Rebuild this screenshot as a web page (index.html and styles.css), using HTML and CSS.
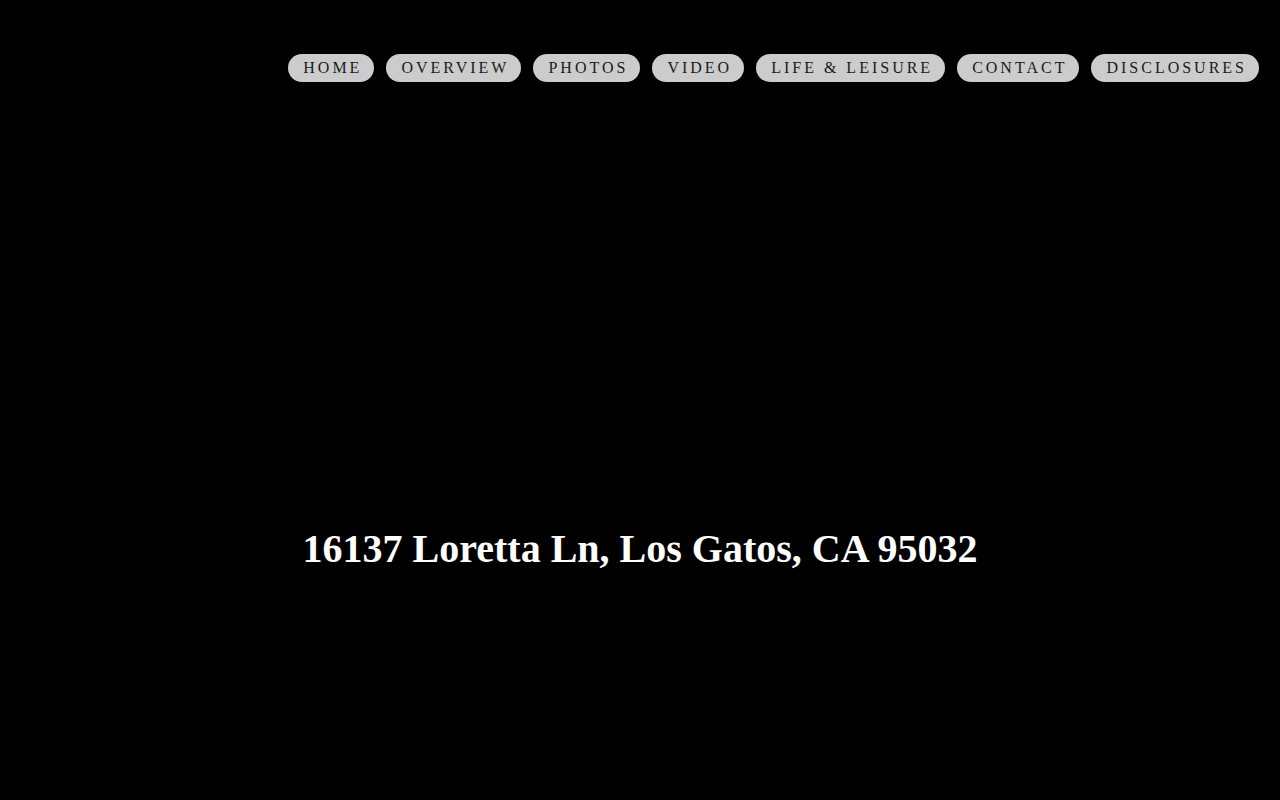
FILE: index.html
```html
<!DOCTYPE html>
<html>
<head>
<meta charset="utf-8">
<link rel="stylesheet" href="styles.css">
</head>
<body>
<header class="top">
  <nav class="nav">
    <a class="pill" href="#">HOME</a>
    <a class="pill" href="#">OVERVIEW</a>
    <a class="pill" href="#">PHOTOS</a>
    <a class="pill" href="#">VIDEO</a>
    <a class="pill" href="#">LIFE &amp; LEISURE</a>
    <a class="pill" href="#">CONTACT</a>
    <a class="pill" href="#">DISCLOSURES</a>
  </nav>
</header>
<main class="hero">
  <h1 class="title">16137 Loretta Ln, Los Gatos, CA 95032</h1>
</main>
</body>
</html>
```
FILE: styles.css
```css
html, body {
  margin: 0;
  padding: 0;
  background: #000;
  height: 100%;
}
body {
  font-family: "Liberation Serif", "Times New Roman", serif;
  overflow: hidden;
}
.top {
  padding: 54px 21px 0 0;
}
.nav {
  display: flex;
  justify-content: flex-end;
  gap: 12px;
}
.pill {
  display: block;
  height: 28px;
  line-height: 28px;
  padding: 0 12px 0 15px;
  background: #cccccc;
  color: #1a1a1a;
  border-radius: 14px;
  font-size: 16px;
  letter-spacing: 3px;
  text-decoration: none;
}
.hero {
  display: flex;
  justify-content: center;
  padding-top: 444px;
}
.title {
  margin: 0;
  color: #fff;
  font-size: 40px;
  font-weight: bold;
  line-height: 46px;
}
```
